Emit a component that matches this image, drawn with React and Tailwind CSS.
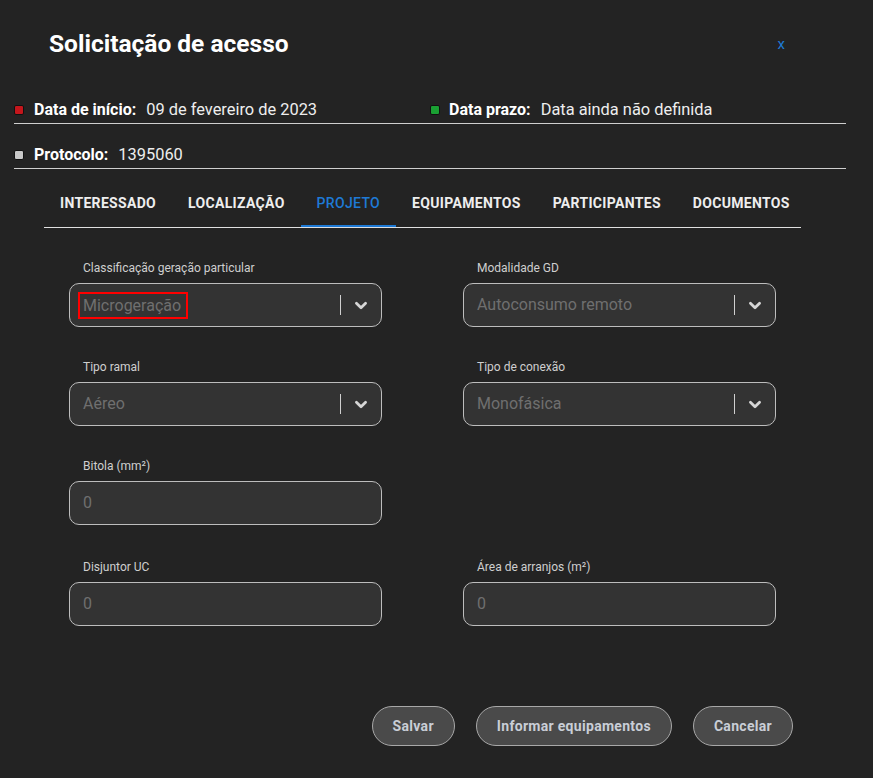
import React from 'react';

const tabs = ['Interessado', 'Localização', 'Projeto', 'Equipamentos', 'Participantes', 'Documentos'];

const Chevron = () => (
  <svg width="22" height="22" viewBox="0 0 24 24" fill="none" stroke="#d6d6d6" strokeWidth="3" strokeLinecap="round" strokeLinejoin="round">
    <path d="M7 10l5 5 5-5" />
  </svg>
);

const SelectField = ({ label, value, marked }) => (
  <div className="flex flex-col">
    <div className="pl-[14px] text-[12px] leading-[14px] text-[#cfcfcf]">{label}</div>
    <div className="mt-[8px] h-[44px] rounded-[10px] border border-[#bdbdbd] bg-[#333333] flex items-center pl-[13px]">
      <div className="flex-1 text-[16px] text-[#6f6f6f]">
        {marked ? (
          <span className="inline-block -ml-[5px] border-2 border-[#ff0000] pl-[3px] pr-[5px] leading-[23px]">{value}</span>
        ) : (
          value
        )}
      </div>
      <div className="w-px h-[20px] bg-[#d0d0d0]" />
      <div className="w-[40px] flex justify-center">
        <Chevron />
      </div>
    </div>
  </div>
);

const InputField = ({ label }) => (
  <div className="flex flex-col">
    <div className="pl-[14px] text-[12px] leading-[14px] text-[#cfcfcf]">{label}</div>
    <div className="mt-[8px] h-[44px] rounded-[10px] border border-[#bdbdbd] bg-[#333333] flex items-center pl-[13px]">
      <span className="text-[16px] text-[#6f6f6f]">0</span>
    </div>
  </div>
);

const Dot = ({ color }) => (
  <span className={`inline-block w-[10px] h-[10px] rounded-[2px] border border-[#111] ${color}`} />
);

export default function App() {
  return (
    <div
      className="w-[873px] h-[778px] bg-[#232323] text-white overflow-hidden"
      style={{ fontFamily: 'Roboto, "Liberation Sans", sans-serif' }}
    >
      {/* header */}
      <div className="flex items-center justify-between pl-[49px] pr-[88px] pt-[30px]">
        <h1 className="text-[24.5px] leading-[28px] font-bold">Solicitação de acesso</h1>
        <button className="text-[#1e7ad6] text-[15px] leading-[28px]">x</button>
      </div>

      {/* info */}
      <div className="mx-[14px] w-[832px] mt-[42px]">
        <div className="grid grid-cols-2 border-b border-[#cfcfcf] pb-[3px]">
          <div className="flex items-center text-[16px] leading-[20px]">
            <span className="mr-[10px] flex"><Dot color="bg-[#c4161c]" /></span>
            <span className="font-bold">Data de início:</span>
            <span className="ml-[10px] text-[16.4px] text-[#eeeeee]">09 de fevereiro de 2023</span>
          </div>
          <div className="flex items-center text-[16px] leading-[20px]">
            <span className="mr-[9px] flex"><Dot color="bg-[#1aa033]" /></span>
            <span className="font-bold">Data prazo:</span>
            <span className="ml-[10px] text-[16.4px] text-[#eeeeee]">Data ainda não definida</span>
          </div>
        </div>
        <div className="flex items-center border-b border-[#cfcfcf] pt-[21px] pb-[3px] text-[16px] leading-[20px]">
          <span className="mr-[10px] flex"><Dot color="bg-[#c8c8c8]" /></span>
          <span className="font-bold">Protocolo:</span>
          <span className="ml-[10px] text-[16.4px] text-[#eeeeee]">1395060</span>
        </div>
      </div>

      {/* tabs */}
      <div className="mx-[44px] w-[757px] mt-[10px] flex border-b border-[#e0e0e0]">
        {tabs.map((t) => {
          const active = t === 'Projeto';
          return (
            <div
              key={t}
              className={`relative h-[48px] px-4 flex items-center text-[14px] uppercase tracking-[0.32px] whitespace-nowrap ${
                active ? 'text-[#1e7ad6] font-medium' : 'text-[#eeeeee] font-bold'
              }`}
            >
              {t}
              {active && <span className="absolute left-0 right-0 bottom-0 h-[2px] bg-[#1e7ad6]" />}
            </div>
          );
        })}
      </div>

      {/* form */}
      <div className="ml-[69px] mt-[33px] w-[707px] grid grid-cols-2 gap-x-[81px] gap-y-[33px]">
        <SelectField label="Classificação geração particular" value="Microgeração" marked />
        <SelectField label="Modalidade GD" value="Autoconsumo remoto" />
        <SelectField label="Tipo ramal" value="Aéreo" />
        <SelectField label="Tipo de conexão" value="Monofásica" />
        <InputField label="Bitola (mm²)" />
        <div />
        <div className="mt-[2px]"><InputField label="Disjuntor UC" /></div>
        <div className="mt-[2px]"><InputField label="Área de arranjos (m²)" /></div>
      </div>

      {/* actions */}
      <div className="mt-[80px] mr-[80px] flex justify-end gap-[21px]">
        {['Salvar', 'Informar equipamentos', 'Cancelar'].map((b) => (
          <button
            key={b}
            className="h-[40px] px-[20px] rounded-full border border-[#a8a8a8] bg-[#4a4a4a] text-[14px] font-bold tracking-[0.3px] text-[#c9ced6]"
          >
            {b}
          </button>
        ))}
      </div>
    </div>
  );
}
